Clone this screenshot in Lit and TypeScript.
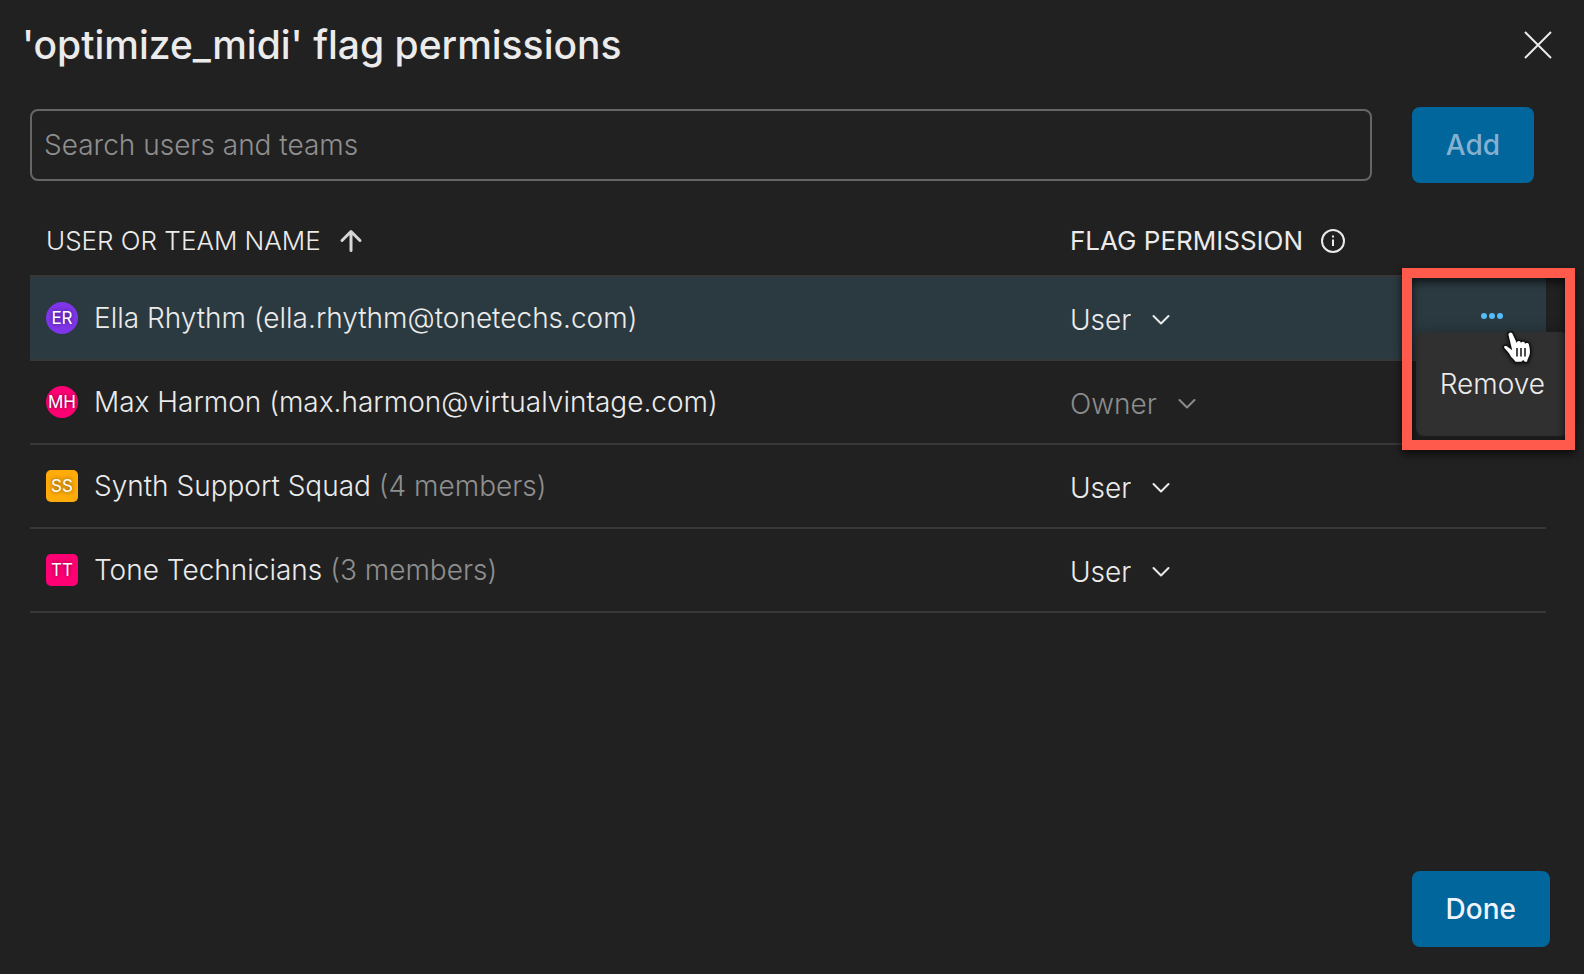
import { LitElement, html, css } from "lit";
import { customElement, property, state } from "lit/decorators.js";

type Member = {
  initials: string;
  name: string;
  detail: string;
  muted: boolean;
  tone: "violet" | "pink" | "amber";
  team: boolean;
  permission: "User" | "Owner";
};

const MEMBERS: Member[] = [
  { initials: "ER", name: "Ella Rhythm", detail: "(ella.rhythm@tonetechs.com)", muted: false, tone: "violet", team: false, permission: "User" },
  { initials: "MH", name: "Max Harmon", detail: "(max.harmon@virtualvintage.com)", muted: false, tone: "pink", team: false, permission: "Owner" },
  { initials: "SS", name: "Synth Support Squad", detail: "(4 members)", muted: true, tone: "amber", team: true, permission: "User" },
  { initials: "TT", name: "Tone Technicians", detail: "(3 members)", muted: true, tone: "pink", team: true, permission: "User" },
];

@customElement("member-avatar")
class MemberAvatar extends LitElement {
  @property() initials = "";
  @property() tone = "violet";
  @property({ type: Boolean }) team = false;

  static styles = css`
    :host { display: block; flex: none; }
    .avatar {
      display: grid;
      place-items: center;
      width: 32px;
      height: 32px;
      border-radius: 50%;
      color: #fff;
      font-size: 17px;
      font-weight: 400;
      line-height: 32px;
      text-shadow: 0 0 4px rgba(0, 0, 0, 0.6);
    }
    .square { border-radius: 5px; }
    .violet { background: #7f35e9; }
    .pink { background: #ff0074; }
    .amber { background: #ffac0a; }
  `;

  render() {
    return html`<span class="avatar ${this.tone} ${this.team ? "square" : ""}" aria-hidden="true">${this.initials}</span>`;
  }
}

@customElement("permission-select")
class PermissionSelect extends LitElement {
  @property() value = "User";
  @property() label = "";

  static styles = css`
    :host { display: block; }
    .field { display: inline-flex; align-items: center; gap: 20px; color: #ebebeb; vertical-align: top; }
    .locked { color: #8c8c8c; }
    select {
      appearance: none;
      field-sizing: content;
      margin: 0;
      padding: 0;
      border: 0;
      background: none;
      color: inherit;
      font: inherit;
      line-height: 40px;
      opacity: 1;
    }
    svg { display: block; pointer-events: none; }
  `;

  render() {
    const locked = this.value === "Owner";
    return html`
      <span class="field ${locked ? "locked" : ""}">
        <select aria-label=${this.label} ?disabled=${locked}>
          ${locked ? html`<option selected>Owner</option>` : html`<option selected>User</option><option>Manager</option>`}
        </select>
        <svg width="20" height="12" viewBox="0 0 20 12" fill="none" stroke="currentColor" stroke-width="2" stroke-linecap="round" stroke-linejoin="round">
          <path d="M2.5 2 10 9.5 17.5 2" />
        </svg>
      </span>
    `;
  }
}

@customElement("app-root")
class AppRoot extends LitElement {
  @state() private members = MEMBERS;

  static styles = css`
    :host {
      display: block;
      font-family: Inter, "Liberation Sans", sans-serif;
      font-size: 28px;
      font-weight: 300;
      line-height: 40px;
      color: #ebebeb;
    }
    * { box-sizing: border-box; }
    button { margin: 0; border: 0; font: inherit; cursor: pointer; }
    .dialog {
      display: flex;
      flex-direction: column;
      min-height: 100vh;
      background: #212121;
      border-right: 2px solid #fff;
    }
    .head {
      display: flex;
      align-items: center;
      justify-content: space-between;
      padding: 20px 32px 0 22px;
    }
    h1 { margin: 0; font-size: 39px; line-height: 50px; font-weight: 500; }
    .close { display: block; padding: 0; background: none; color: #ebebeb; }
    .close svg { display: block; }
    .search {
      display: flex;
      align-items: center;
      gap: 40px;
      padding: 37px 50px 0 30px;
    }
    .search input {
      flex: 1;
      min-width: 0;
      height: 72px;
      padding: 0 12px;
      border: 2px solid #666;
      border-radius: 8px;
      background: transparent;
      color: inherit;
      font: inherit;
    }
    .search input::placeholder { color: #8f8f8f; opacity: 1; }
    .primary {
      height: 76px;
      padding: 0 34px;
      border-radius: 8px;
      background: #00669c;
      color: #f0f4fa;
      font-weight: 500;
    }
    .primary:disabled { color: #85b0d0; }
    .list { padding: 24px 38px 0 30px; }
    table { width: 100%; border-collapse: separate; border-spacing: 0; table-layout: fixed; }
    .col-permission { width: 383px; }
    .col-actions { width: 109px; }
    th { height: 70px; padding: 0 16px; text-align: left; font-size: 26px; font-weight: 300; border-bottom: 2px solid #383838; }
    th.permission { font-weight: 400; }
    td { height: 84px; padding: 0 16px; border-bottom: 2px solid #383838; }
    .label { display: flex; align-items: center; gap: 18px; }
    .label svg { display: block; flex: none; }
    .active td { background: #2b3a41; }
    .person { display: flex; align-items: center; gap: 16px; white-space: nowrap; }
    .muted { color: #8f8f8f; }
    .permission { padding: 4px 0 0 16px; }
    th.permission { padding: 0 16px; }
    .actions { position: relative; padding: 0 0 4px; }
    .more { display: block; margin: 0 auto; padding: 12px; background: none; color: #55bdf9; }
    .more svg { display: block; }
    .menu {
      position: absolute;
      top: 55px;
      right: -23px;
      z-index: 1;
      padding: 32px 24px;
      border-radius: 8px;
      background: #303030;
      box-shadow: 0 0 16px rgba(0, 0, 0, 0.3);
    }
    .menu button { display: block; padding: 0; background: none; color: inherit; }
    .callout {
      position: absolute;
      top: -9px;
      right: -29px;
      z-index: 2;
      width: 173px;
      height: 182px;
      border: 10px solid #ff5a4c;
      filter: drop-shadow(0 4px 4px rgba(0, 0, 0, 0.7));
      pointer-events: none;
    }
    .pointer { position: absolute; top: 52px; right: 10px; z-index: 3; pointer-events: none; filter: drop-shadow(0 1px 2px rgba(0, 0, 0, 0.6)); }
    .foot { display: flex; justify-content: flex-end; margin-top: auto; padding: 24px 34px 27px; }
  `;

  private renderExtras() {
    return html`
      <button class="more" aria-label="More actions" aria-expanded="true">
        <svg width="24" height="8" viewBox="0 0 24 8" fill="currentColor">
          <circle cx="4" cy="4" r="3" /><circle cx="12" cy="4" r="3" /><circle cx="20" cy="4" r="3" />
        </svg>
      </button>
      <div class="menu"><button>Remove</button></div>
      <div class="callout"></div>
      <svg class="pointer" width="36" height="36" viewBox="0 0 36 36">
        <path d="M9.500 3C11 2.300 12.700 3.200 13.300 4.800l3.400 7.400c.6-1.400 3.800-1.500 4.500.4 1-1.100 3.700-.8 4.200 1 1.300-1 3.800-.3 4.200 1.600.9 3.300 1.400 7.300.8 10.300-.4 2-1.400 3.700-2.200 5.500l-.5 2.500h-3.200l-1.300-1.500-1.700 1.500H15c-1.500-2.500-4-4.200-5.500-7-1.200-2.300-3.500-4.700-5.500-6.800-2-2.200.6-4.500 3-3.200l4 3L7.800 6.300C7.300 4.800 8 3.600 9.500 3Z" fill="#fff" stroke="#111" stroke-width="1.500" />
        <path d="M17 19v8.500M21 19v8.500M25 19v8.500" stroke="#111" stroke-width="1.500" />
      </svg>
    `;
  }

  private renderRow(m: Member, index: number) {
    return html`
      <tr class=${index === 0 ? "active" : ""}>
        <td>
          <div class="person">
            <member-avatar .initials=${m.initials} .tone=${m.tone} ?team=${m.team}></member-avatar>
            <span>${m.name} <span class=${m.muted ? "muted" : ""}>${m.detail}</span></span>
          </div>
        </td>
        <td class="permission">
          <permission-select .value=${m.permission} .label=${`Permission for ${m.name}`}></permission-select>
        </td>
        <td class="actions">${index === 0 ? this.renderExtras() : ""}</td>
      </tr>
    `;
  }

  render() {
    return html`
      <main class="dialog">
        <header class="head">
          <h1>'optimize_midi' flag permissions</h1>
          <button class="close" aria-label="Close">
            <svg width="28" height="28" viewBox="0 0 28 28" fill="none" stroke="currentColor" stroke-width="2">
              <path d="M1 1 27 27M27 1 1 27" />
            </svg>
          </button>
        </header>
        <div class="search">
          <input type="text" aria-label="Search users and teams" placeholder="Search users and teams" />
          <button class="primary" disabled>Add</button>
        </div>
        <div class="list">
          <table>
            <colgroup><col /><col class="col-permission" /><col class="col-actions" /></colgroup>
            <thead>
              <tr>
                <th>
                  <span class="label">USER OR TEAM NAME
                    <svg width="24" height="24" viewBox="0 0 24 24" fill="none" stroke="#d6d6d6" stroke-width="3" stroke-linecap="round" stroke-linejoin="round">
                      <path d="M12 21.500V3M3 11.500 12 2.500 21 11.500" />
                    </svg>
                  </span>
                </th>
                <th class="permission">
                  <span class="label">FLAG PERMISSION
                    <svg width="24" height="24" viewBox="0 0 24 24" fill="none" stroke="currentColor" stroke-width="2">
                      <circle cx="12" cy="12" r="11" /><path d="M12 10.500v6.500" /><path d="M12 6.500v2" />
                    </svg>
                  </span>
                </th>
                <th></th>
              </tr>
            </thead>
            <tbody>${this.members.map((m, i) => this.renderRow(m, i))}</tbody>
          </table>
        </div>
        <footer class="foot"><button class="primary">Done</button></footer>
      </main>
    `;
  }
}
